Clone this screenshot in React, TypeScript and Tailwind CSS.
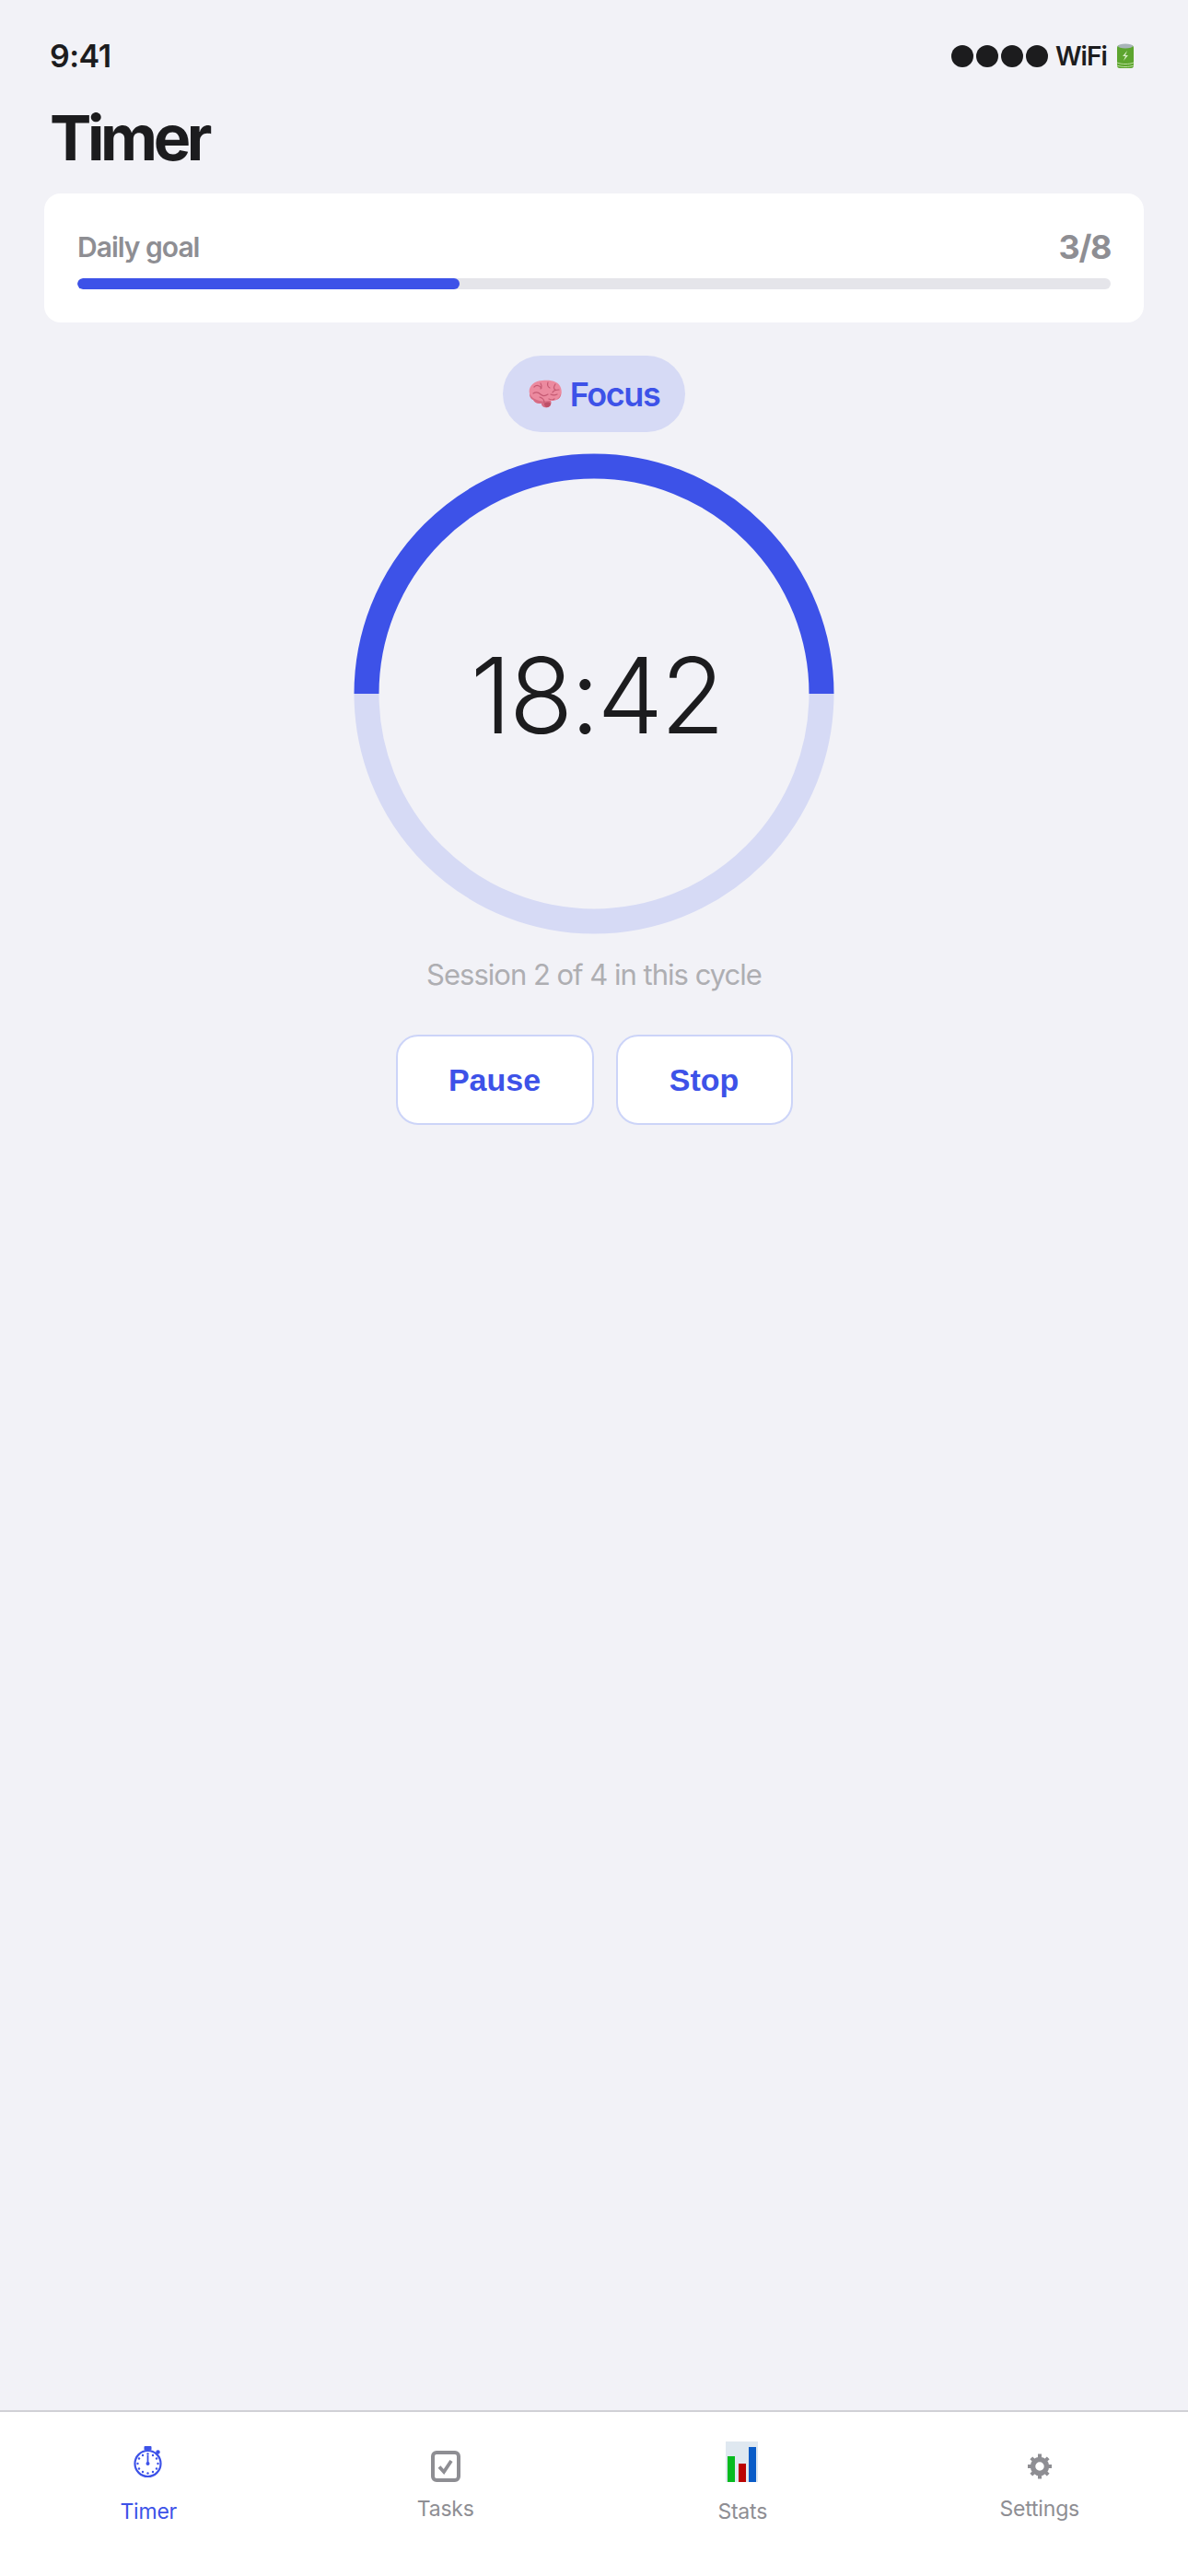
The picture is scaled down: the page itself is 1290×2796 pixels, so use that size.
import React from "react";

const Brain = () => (
  <svg width="37" height="31" viewBox="0 0 37 31" className="shrink-0">
    <path d="M1 15C-1 8 6 1 15 1c9-1 18 1 20 8 2 6 0 11-5 13-2 1-5 1-6 1 1 3 0 6-3 7-4 1-7-1-7-4-3 0-7 0-9-4-3-1-4-4-4-7z" fill="#ec8a9f" />
    <path d="M1 15c2 5 7 7 11 8 3 1 8 0 12 0 4 0 9-1 11-8 0 4-2 6-5 7-2 1-5 1-6 1 1 3 0 6-3 7-4 1-7-1-7-4-3 0-7 0-9-4-3-1-4-4-4-7z" fill="#d66c84" />
    <path d="M17 26c2-2 6-2 7 0 0 2-2 4-4 4s-3-2-3-4z" fill="#bd5068" />
    <path d="M6 8c3-3 6-1 8 1M13 4c2 3 1 4 0 6M21 3c-1 3 0 5 2 6M29 5c-2 3-2 5 0 6M33 11c-3 0-6 1-7 3M5 15c3-2 6-1 8 1s5 2 8 0M12 19c3 1 5 3 5 6M24 16c2 1 5 1 7 0M22 21c2 1 5 1 6 0" fill="none" stroke="#c55a73" strokeWidth="1.2" strokeLinecap="round" />
  </svg>
);

const Battery = () => (
  <svg width="20" height="28" viewBox="0 0 20 28" className="shrink-0">
    <rect x="1" y="2" width="18" height="25" rx="3" fill="#5da52f" />
    <ellipse cx="10" cy="3" rx="8" ry="2.4" fill="#a8b4b8" />
    <path d="M1 21c5 2 13 2 18 0M1 24c5 2 13 2 18 0" fill="none" stroke="#b9dc9c" strokeWidth="1" />
    <path d="M12 8l-5 6h3l-2 5 5-6h-3z" fill="#d7ecc6" />
  </svg>
);

const Stopwatch = () => (
  <svg width="32" height="36" viewBox="0 0 32 36" className="shrink-0">
    <rect x="11.5" y="0" width="8" height="4.5" rx="1" fill="#3d52e8" />
    <circle cx="26.5" cy="6.5" r="2.2" fill="#3d52e8" />
    <circle cx="15.5" cy="19" r="14" fill="none" stroke="#3d52e8" strokeWidth="2.2" />
    <g fill="#3d52e8">
      <circle cx="15.5" cy="8.5" r="1.2" /><circle cx="21" cy="10" r="1.2" /><circle cx="25" cy="13.5" r="1.2" />
      <circle cx="26.5" cy="19" r="1.2" /><circle cx="25" cy="24.5" r="1.2" /><circle cx="21" cy="28" r="1.2" />
      <circle cx="15.5" cy="29.5" r="1.2" /><circle cx="10" cy="28" r="1.2" /><circle cx="6" cy="24.5" r="1.2" />
      <circle cx="4.5" cy="19" r="1.2" /><circle cx="6" cy="13.5" r="1.2" /><circle cx="10" cy="10" r="1.2" />
      <rect x="14.6" y="10" width="1.8" height="9" /><circle cx="15.5" cy="19" r="2" />
    </g>
  </svg>
);

const CheckBox = () => (
  <svg width="32" height="34" viewBox="0 0 32 34" className="shrink-0">
    <rect x="2" y="2" width="28" height="30" rx="4" fill="none" stroke="#8e8e93" strokeWidth="4" />
    <path d="M9 17.5l5 5.5 8-12" fill="none" stroke="#8e8e93" strokeWidth="3.8" />
  </svg>
);

const Chart = () => (
  <svg width="36" height="44" viewBox="0 0 36 44" className="shrink-0">
    <rect width="35" height="44" fill="#dfe8f0" />
    <rect x="2" y="16" width="8" height="28" fill="#06bb1f" />
    <rect x="14" y="24" width="8" height="20" fill="#bb0404" />
    <rect x="25" y="6" width="8" height="38" fill="#0a5cc8" />
  </svg>
);

const Gear = () => (
  <svg width="26" height="28" viewBox="0 0 26 28" className="shrink-0">
    <circle cx="13" cy="14" r="7.5" fill="none" stroke="#8e8e93" strokeWidth="5.5" />
    <g stroke="#8e8e93" strokeWidth="4">
      <path d="M13 0.5v5M13 22.5v5M0 14h5M21 14h5M3.8 4.8l3.6 3.6M18.6 19.6l3.6 3.6M3.8 23.2l3.6-3.6M18.6 8.4l3.6-3.6" />
    </g>
  </svg>
);

const NavItem = ({ icon, label, active, lower, gap }: { icon: React.ReactNode; label: string; active?: boolean; lower?: boolean; gap: string }) => (
  <div className={`flex flex-1 flex-col items-center justify-end ${lower ? "h-[122px]" : "h-[119px]"}`}>
    <div className={`flex items-end justify-center ${gap}`}>{icon}</div>
    <span className={`text-[23px] leading-[28px] tracking-[-0.2px] ${active ? "text-[#3d52e8]" : "text-[#8e8e93]"}`}>{label}</span>
  </div>
);

export default function App() {
  return (
    <div className="flex h-[2796px] w-[1290px] flex-col overflow-hidden bg-[#f2f2f7] text-[#1c1c1e] font-['Inter',sans-serif]">
      <div className="flex h-[82px] items-end justify-between pl-[54px] pr-[58px]">
        <span className="text-[34px] font-semibold leading-[42px] tracking-[-0.5px]">9:41</span>
        <div className="mb-[4px] flex items-center">
          <div className="flex gap-[3px]">
            <span className="h-[24px] w-[24px] rounded-full bg-[#1c1c1e]" />
            <span className="h-[24px] w-[24px] rounded-full bg-[#1c1c1e]" />
            <span className="h-[24px] w-[24px] rounded-full bg-[#1c1c1e]" />
            <span className="h-[24px] w-[24px] rounded-full bg-[#1c1c1e]" />
          </div>
          <span className="ml-[8px] mr-[10px] text-[28px] font-semibold leading-[34px] tracking-[-0.9px]">WiFi</span>
          <Battery />
        </div>
      </div>
      <h1 className="mt-[26px] pl-[54px] text-[68px] font-bold leading-[82px] tracking-[-4.4px]">Timer</h1>
      <div className="mx-[48px] mt-[20px] h-[140px] rounded-[18px] bg-white px-[36px] pt-[36px]">
        <div className="flex h-[44px] items-center justify-between">
          <span className="text-[30px] font-semibold tracking-[-1px] text-[#8e8e93]">Daily goal</span>
          <span className="text-[36px] font-bold tracking-[-1.4px] text-[#8e8e93]">3/8</span>
        </div>
        <div className="mt-[12px] h-[12px] overflow-hidden rounded-full bg-[#e5e5ea]">
          <div className="h-full w-[37%] rounded-full bg-[#3d52e8]" />
        </div>
      </div>
      <div className="mt-[36px] flex flex-col items-center">
        <div className="flex h-[83px] w-[198px] items-center justify-center gap-[8px] rounded-full bg-[#d6daf5]">
          <Brain />
          <span className="text-[36px] font-semibold tracking-[-1.4px] text-[#3d52e8]">Focus</span>
        </div>
        <div className="mt-[23px] grid h-[522px] w-[522px] place-items-center">
          <svg width="522" height="522" viewBox="0 0 522 522" className="col-start-1 row-start-1">
            <path d="M14 261a247 247 0 0 0 494 0" fill="none" stroke="#d6daf5" strokeWidth="27" />
            <path d="M14 261a247 247 0 0 1 494 0" fill="none" stroke="#3d52e8" strokeWidth="27" />
          </svg>
          <span className="col-start-1 row-start-1 pl-[5px] pt-[3px] text-[114px] font-light leading-none tracking-[-3px]">18:42</span>
        </div>
        <p className="mt-[22px] text-[31px] leading-[44px] tracking-[-1px] text-[#aeaeb2]">Session 2 of 4 in this cycle</p>
        <div className="mt-[43px] flex gap-[24px] font-['Liberation_Sans',sans-serif]">
          <button className="h-[98px] w-[215px] rounded-[24px] border-[2px] border-[#ccd4f8] bg-white text-[34px] font-bold text-[#3d52e8]">Pause</button>
          <button className="h-[98px] w-[192px] rounded-[24px] border-[2px] border-[#ccd4f8] bg-white text-[34px] font-bold text-[#3d52e8]">Stop</button>
        </div>
      </div>
      <div className="mt-auto flex h-[180px] items-start border-t-[2px] border-[#d1d1d6] bg-white">
        <NavItem icon={<Stopwatch />} label="Timer" active lower gap="mb-[21px]" />
        <NavItem icon={<CheckBox />} label="Tasks" gap="mb-[15px]" />
        <NavItem icon={<Chart />} label="Stats" lower gap="mb-[18px]" />
        <NavItem icon={<Gear />} label="Settings" gap="mb-[18px]" />
      </div>
    </div>
  );
}
